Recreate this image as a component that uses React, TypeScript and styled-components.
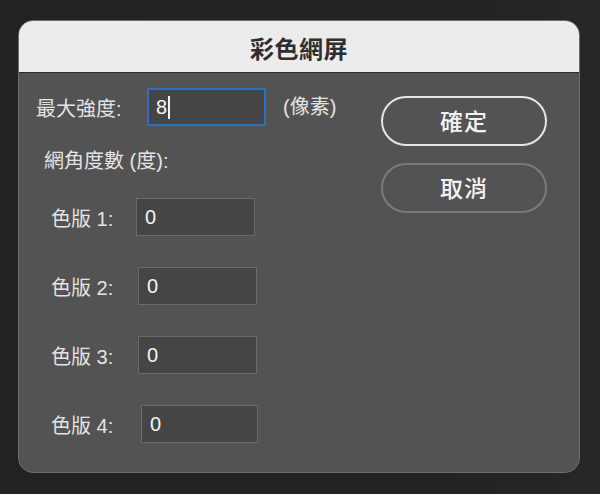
import React from "react";
import styled, { createGlobalStyle } from "styled-components";

const Global = createGlobalStyle`
  html, body {
    margin: 0;
    padding: 0;
    background: #232323;
  }
  body {
    font-family: "Liberation Sans", "Noto Sans CJK TC", sans-serif;
    -webkit-font-smoothing: antialiased;
  }
`;

const Stage = styled.div`
  width: 600px;
  height: 494px;
  padding: 20px 0 0 18px;
  box-sizing: border-box;
  background: linear-gradient(90deg, #222222 0%, #232323 80%, #272727 100%);
`;

const Dialog = styled.div`
  width: 562px;
  height: 453px;
  box-sizing: border-box;
  border-radius: 15px;
  border: 1px solid #6c6c6c;
  background: #535353;
  overflow: hidden;
  display: flex;
  flex-direction: column;
`;

const TitleBar = styled.div`
  height: 52px;
  flex: none;
  background: #ececec;
  border-bottom: 1px solid #2c2c2c;
  box-sizing: border-box;
  display: flex;
  align-items: center;
  justify-content: center;
  font-family: "Noto Sans CJK TC", sans-serif;
  font-weight: 700;
  font-size: 24px;
  color: #2e2e2e;
  letter-spacing: 0.5px;
  padding-top: 2px;
`;

const Body = styled.div`
  flex: 1;
  display: flex;
  padding: 15px 32px 0 17px;
`;

const Form = styled.div`
  display: flex;
  flex-direction: column;
`;

const Label = styled.span<{ $width?: number }>`
  width: ${(p) => (p.$width ? `${p.$width}px` : "auto")};
  flex: none;
  font-size: 20px;
  color: #e4e4e4;
  white-space: nowrap;
`;

const StrengthRow = styled.div`
  display: flex;
  align-items: center;
  height: 38px;
`;

const Field = styled.div<{ $focused?: boolean; $width?: number }>`
  width: ${(p) => p.$width ?? 119}px;
  height: 38px;
  box-sizing: border-box;
  flex: none;
  background: #454545;
  border: ${(p) => (p.$focused ? "2px solid #2a6fc2" : "1.5px solid #6a6a6a")};
  display: flex;
  align-items: center;
  padding-left: ${(p) => (p.$focused ? 7 : 8)}px;
  font-size: 20px;
  color: #f4f4f4;
`;

const Caret = styled.span`
  display: inline-block;
  width: 1.5px;
  height: 23px;
  margin-left: 1px;
  background: #f4f4f4;
`;

const Unit = styled.span`
  margin-left: 17px;
  font-size: 20px;
  color: #e4e4e4;
  white-space: nowrap;
  padding-bottom: 4px;
`;

const Heading = styled.div`
  margin: 23px 0 0 8px;
  line-height: 24px;
  font-size: 20px;
  color: #e4e4e4;
`;

const Channels = styled.div`
  display: flex;
  flex-direction: column;
  gap: 31px;
  margin-top: 25px;
`;

const ChannelRow = styled.div`
  display: flex;
  align-items: center;
  height: 38px;
  padding-left: 15px;
`;

const Actions = styled.div`
  margin-left: auto;
  margin-top: 8px;
  display: flex;
  flex-direction: column;
  gap: 17px;
`;

const PillButton = styled.button<{ $primary?: boolean }>`
  width: 166px;
  height: 50px;
  box-sizing: border-box;
  border-radius: 25px;
  background: transparent;
  border: 2px solid ${(p) => (p.$primary ? "#e6e6e6" : "#7a7a7a")};
  color: #f2f2f2;
  font-family: "Noto Sans CJK TC", sans-serif;
  font-size: 23px;
  font-weight: 500;
  letter-spacing: 1px;
  display: flex;
  align-items: center;
  justify-content: center;
  padding: 0 0 2px;
  cursor: default;
`;

const channels = [
  { n: 1, label: 85, width: 119 },
  { n: 2, label: 87, width: 119 },
  { n: 3, label: 87, width: 119 },
  { n: 4, label: 90, width: 117 },
];

export default function App() {
  return (
    <>
      <Global />
      <Stage>
        <Dialog>
          <TitleBar>彩色網屏</TitleBar>
          <Body>
            <Form>
              <StrengthRow>
                <Label $width={111}>最大強度:</Label>
                <Field $focused>
                  8<Caret />
                </Field>
                <Unit>(像素)</Unit>
              </StrengthRow>
              <Heading>網角度數 (度):</Heading>
              <Channels>
                {channels.map((c) => (
                  <ChannelRow key={c.n}>
                    <Label $width={c.label}>色版 {c.n}:</Label>
                    <Field $width={c.width}>0</Field>
                  </ChannelRow>
                ))}
              </Channels>
            </Form>
            <Actions>
              <PillButton $primary>確定</PillButton>
              <PillButton>取消</PillButton>
            </Actions>
          </Body>
        </Dialog>
      </Stage>
    </>
  );
}
